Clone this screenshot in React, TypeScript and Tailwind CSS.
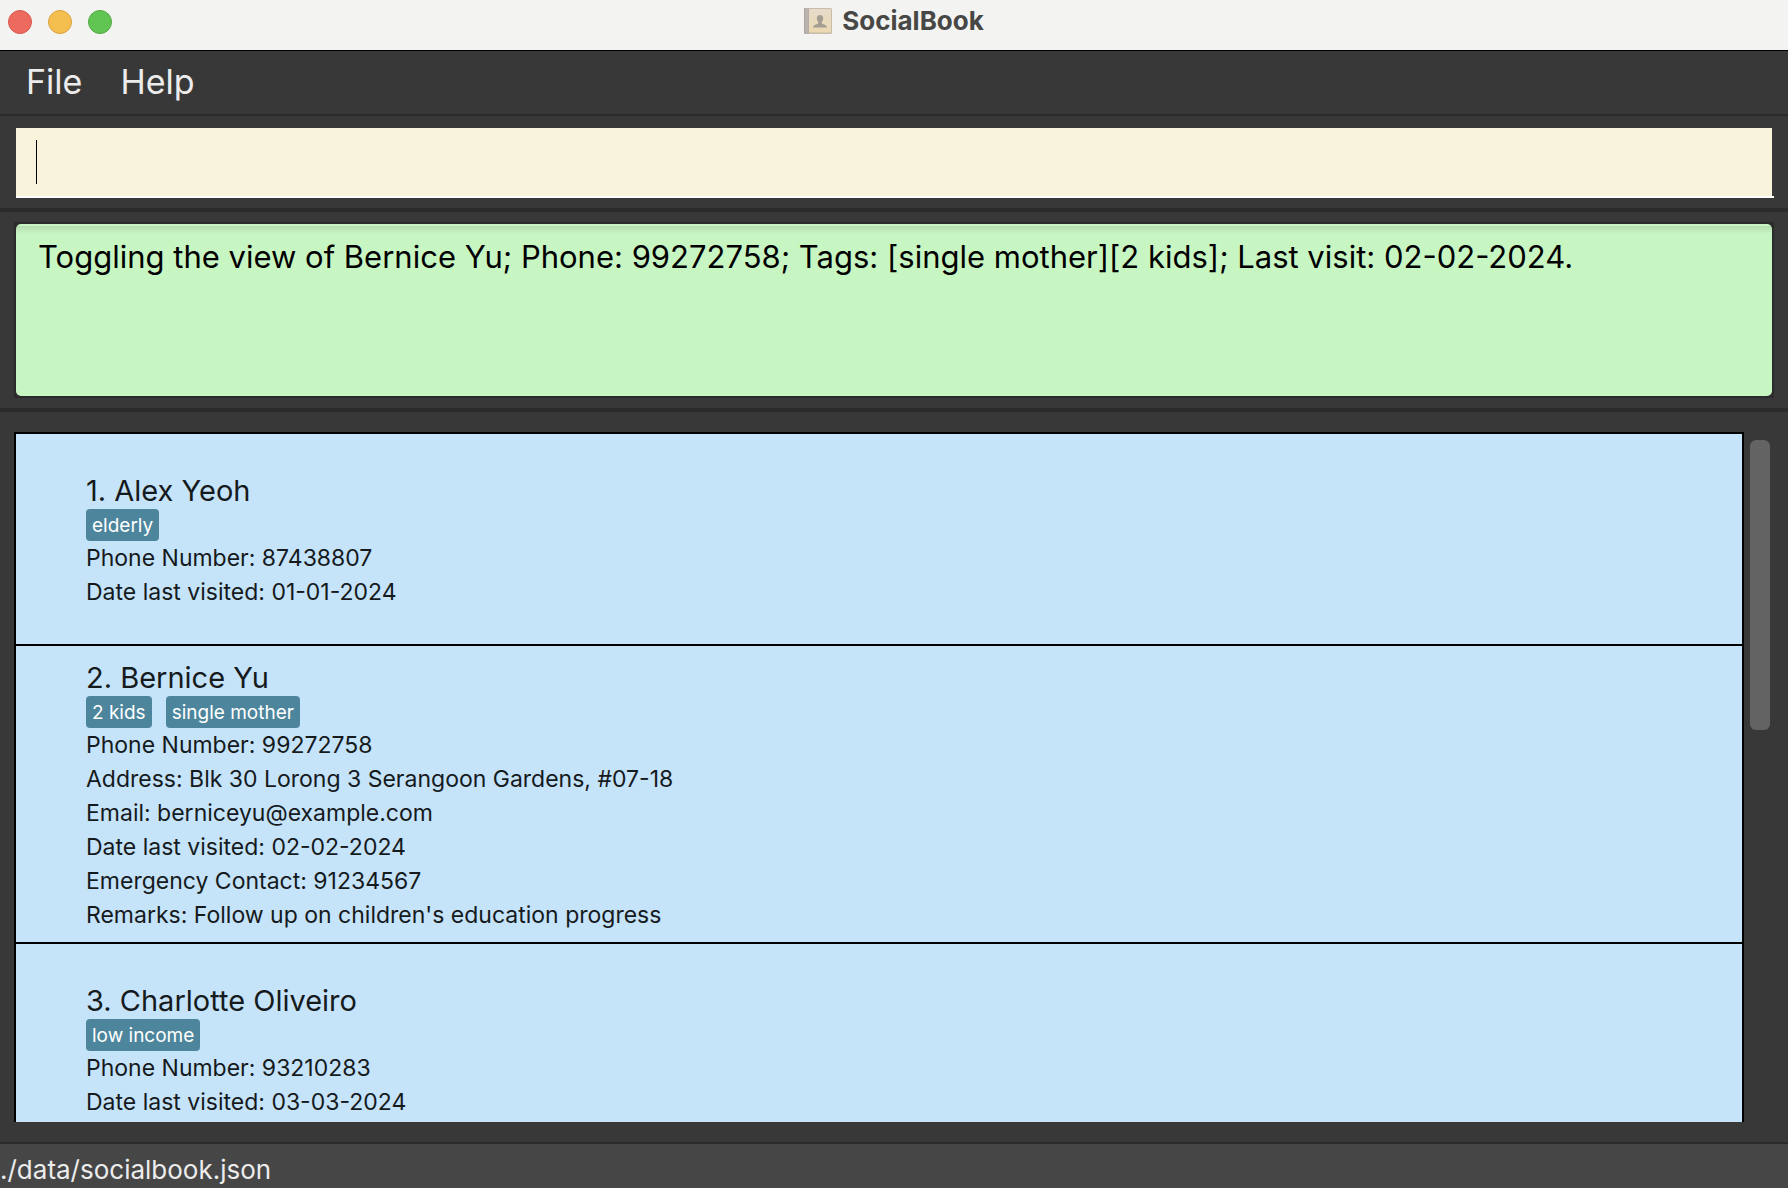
type Person = { name: string; tags: string[]; fields: string[] };

const people: Person[] = [
  {
    name: "1. Alex Yeoh",
    tags: ["elderly"],
    fields: ["Phone Number: 87438807", "Date last visited: 01-01-2024"],
  },
  {
    name: "2. Bernice Yu",
    tags: ["2 kids", "single mother"],
    fields: [
      "Phone Number: 99272758",
      "Address: Blk 30 Lorong 3 Serangoon Gardens, #07-18",
      "Email: berniceyu@example.com",
      "Date last visited: 02-02-2024",
      "Emergency Contact: 91234567",
      "Remarks: Follow up on children's education progress",
    ],
  },
  {
    name: "3. Charlotte Oliveiro",
    tags: ["low income"],
    fields: ["Phone Number: 93210283", "Date last visited: 03-03-2024"],
  },
];

function BookIcon() {
  return (
    <svg width="28" height="28" viewBox="0 0 28 28" aria-hidden="true">
      <defs>
        <linearGradient id="cover" x1="0" y1="0" x2="0" y2="1">
          <stop offset="0" stopColor="#e6dccb" />
          <stop offset="1" stopColor="#ecd9b2" />
        </linearGradient>
        <linearGradient id="spine" x1="0" y1="0" x2="1" y2="0">
          <stop offset="0" stopColor="#aaa39e" />
          <stop offset="0.5" stopColor="#bdb6b1" />
          <stop offset="1" stopColor="#b3aba4" />
        </linearGradient>
      </defs>
      <rect x="0" y="1" width="28" height="26" rx="1.5" fill="#c8bda9" />
      <rect x="5" y="2" width="22" height="23.5" rx="1" fill="url(#cover)" />
      <rect x="0" y="1" width="5" height="26" rx="1" fill="url(#spine)" />
      <path
        d="M16 8c-2 0-3.200 1.400-3.200 3.500 0 1.500.6 2.700 1.400 3.500v1.200c-.3.900-4.700 1.300-5.200 4.300h14c-.5-3-4.900-3.400-5.200-4.300V15c.8-.8 1.400-2 1.400-3.500C19.200 9.400 18 8 16 8z"
        fill="#a49d94"
      />
    </svg>
  );
}

function PersonCard({ person }: { person: Person }) {
  return (
    <li className="flex min-h-[212px] shrink-0 flex-col justify-center border-b-2 border-black bg-[#c5e3f9] px-[70px] py-[10px] text-[#151a1d]">
      <h2 className="pt-1 text-[29px] leading-9">{person.name}</h2>
      <ul className="flex gap-3.5">
        {person.tags.map((tag) => (
          <li key={tag} className="h-8 rounded bg-[#4d869c] px-1.5 text-[19px] leading-[34px] text-white">
            {tag}
          </li>
        ))}
      </ul>
      {person.fields.map((field) => (
        <p key={field} className="text-[23px] leading-[34px]">
          {field}
        </p>
      ))}
    </li>
  );
}

export default function App() {
  return (
    <div className="flex h-screen flex-col overflow-hidden bg-[#383838] font-['Inter',sans-serif]">
      <header className="relative flex h-[51px] shrink-0 items-center justify-center border-b border-black bg-[#f3f3f1] pb-2">
        <div className="absolute top-[10px] left-2 flex gap-4">
          <button aria-label="Close" className="size-6 rounded-full border border-[#d8574c] bg-[#ec6a5e]" />
          <button aria-label="Minimize" className="size-6 rounded-full border border-[#d9a23c] bg-[#f4bf4f]" />
          <button aria-label="Zoom" className="size-6 rounded-full border border-[#52a942] bg-[#61c554]" />
        </div>
        <h1 className="flex items-center gap-2.5 text-[26px] leading-8 font-bold text-[#474745]">
          <BookIcon />
          SocialBook
        </h1>
      </header>

      <nav className="flex h-[65px] shrink-0 items-center gap-[38px] border-b-2 border-[#2b2b2b] px-[26px] pb-0.5 text-[34px] leading-[44px] text-[#ececec]">
        <button>File</button>
        <button>Help</button>
      </nav>

      <section className="shrink-0 border-b-4 border-[#2b2b2b] pt-3 pr-3.5 pb-[10px] pl-4">
        <div className="relative border-b-2 border-white pr-0.5">
          <input
            aria-label="Command"
            className="block h-[68px] w-full bg-[#faf3dc] px-5 text-[31px] caret-transparent outline-none"
          />
          <span className="absolute top-3 left-5 h-11 w-px bg-black" />
        </div>
      </section>

      <section className="shrink-0 border-b-4 border-[#2b2b2b] px-3.5 py-[10px]">
        <div className="border-2 border-[#2b2b2b] bg-[#2b2b2b]">
          <textarea
            readOnly
            aria-label="Result"
            value="Toggling the view of Bernice Yu; Phone: 99272758; Tags: [single mother][2 kids]; Last visit: 02-02-2024."
            className="block h-[172px] w-full resize-none rounded-[5px] bg-[#c8f6c3] bg-[linear-gradient(to_bottom,#c8f6c3_2px,#b5deb0_2px,#c8f6c3_10px)] px-[22px] py-3 text-[31px] leading-[42px] text-black outline-none"
          />
        </div>
      </section>

      <main className="flex min-h-0 flex-1 gap-1.5 pt-5 pr-[18px] pb-5 pl-3.5">
        <ul className="flex min-w-0 flex-1 flex-col overflow-hidden border-x-2 border-t-2 border-black bg-[#c5e3f9]">
          {people.map((person) => (
            <PersonCard key={person.name} person={person} />
          ))}
        </ul>
        <div className="w-5 pt-2">
          <div className="h-[290px] rounded-md bg-[#636363]" />
        </div>
      </main>

      <footer className="h-[46px] shrink-0 border-t-2 border-[#2b2b2b] bg-[#464646] pt-2 text-[26px] leading-9 text-[#ececec]">
        ./data/socialbook.json
      </footer>
    </div>
  );
}
